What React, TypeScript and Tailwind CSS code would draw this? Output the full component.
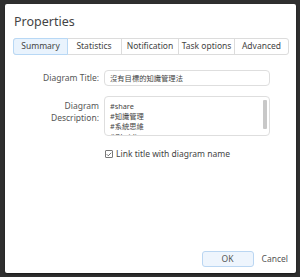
import { Check } from 'lucide-react';

const tabs = [
  { label: 'Summary', w: 'w-[55px]' },
  { label: 'Statistics', w: 'w-[54px]' },
  { label: 'Notification', w: 'w-[57px]' },
  { label: 'Task options', w: 'w-[56px]' },
  { label: 'Advanced', w: 'w-[54px]' },
];

export default function App() {
  return (
    <div className="w-[300px] h-[277px] bg-[#2f2f2f] pt-[4px] pl-[5px] pr-[4px] pb-[4px] font-['Noto_Sans','Noto_Sans_CJK_TC',sans-serif]">
      <div className="h-full bg-white rounded-[2px] flex flex-col shadow-[0_1px_2px_rgba(0,0,0,0.5)]">
        {/* Title */}
        <div className="pl-[9px] pt-[8px] text-[12.5px] leading-[20px] text-[#444]">Properties</div>

        {/* Tabs */}
        <div className="ml-[8px] mt-[6px] flex h-[17px] w-max border border-[#dcdcdc] rounded-[3px] text-[8.5px] text-[#444]">
          {tabs.map((t, i) => (
            <div
              key={t.label}
              className={`${t.w} flex items-center justify-center ${
                i === 0
                  ? 'bg-[#e9f3fd] border border-[#b8d8f5] -m-px rounded-l-[3px]'
                  : 'border-l border-[#dcdcdc]'
              } ${i === 1 ? 'border-l-0' : ''}`}
            >
              {t.label}
            </div>
          ))}
        </div>

        {/* Form */}
        <div className="mt-[15px] flex flex-col gap-[10px] text-[8.5px] text-[#555]">
          <div className="flex items-center gap-[5px]">
            <div className="w-[94px] text-right">Diagram Title:</div>
            <div className="w-[166px] h-[16px] border border-[#dedede] rounded-[4px] pl-[5px] flex items-center text-[7.3px] text-[#444]">
              沒有目標的知識管理法
            </div>
          </div>
          <div className="flex items-start gap-[5px]">
            <div className="w-[94px] text-right leading-[12px] pt-[4px]">
              Diagram
              <br />
              Description:
            </div>
            <div className="w-[166px] h-[40px] border border-[#dedede] rounded-[4px] pl-[5px] pt-[4px] pr-[2px] flex overflow-hidden text-[7.3px] leading-[10px] text-[#444]">
              <div className="flex-1">
                <div>#share</div>
                <div>#知識管理</div>
                <div>#系統思維</div>
                <div>#Obsidian</div>
              </div>
              <div className="w-[4px] h-[29px] mt-[-1px] bg-[#c8c8c8] rounded-[1px]" />
            </div>
          </div>
          <div className="flex items-center gap-[3px] pl-[100px] mt-[2px]">
            <div className="w-[8px] h-[8px] border border-[#777] rounded-[1px] flex items-center justify-center">
              <Check className="w-[7px] h-[7px] text-[#444]" strokeWidth={3} />
            </div>
            <span className="text-[#444]">Link title with diagram name</span>
          </div>
        </div>

        {/* Footer */}
        <div className="mt-auto mb-[6px] flex items-center justify-end pr-[8px] gap-[8px] text-[8.5px] text-[#555]">
          <div className="w-[52px] h-[16px] bg-[#eef5fd] border border-[#bad6f2] rounded-[3px] flex items-center justify-center">OK</div>
          <span>Cancel</span>
        </div>
      </div>
    </div>
  );
}
